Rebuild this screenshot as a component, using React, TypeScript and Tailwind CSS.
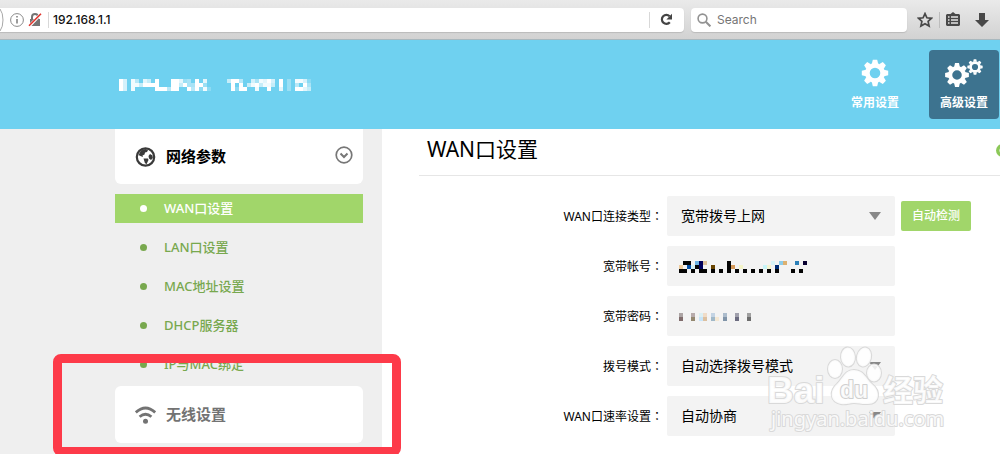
import { useState, type ReactNode } from "react";

const cjk = "font-['Noto_Sans','Noto_Sans_CJK_SC',sans-serif]";

type Cell = [number, number, string];

/* censored text, drawn as 4px blocks */
function Mosaic({ cells, cols, rows, className }: { cells: Cell[]; cols: number; rows: number; className?: string }) {
  return (
    <svg width={cols * 4} height={rows * 4} shapeRendering="crispEdges" className={className} aria-hidden="true">
      {cells.map(([x, y, c], i) => (
        <rect key={i} x={x * 4} y={y * 4} width="4" height="4" fill={c} />
      ))}
    </svg>
  );
}

// digits are tenths of white opacity, x is fully opaque
const brand = [
  "x7.95.86.x...xx834.x.8.....6xx5..7498x7.x.3.9972",
  "x7.996xxxx...xx6x44xx3......x.x.69x6996.x.3.5.x4",
  "x7.9.....xxx5xx..x5x292.....x2xx..9..x..8.3.xx86",
];
const brandCells: Cell[] = brand.flatMap((row, y) =>
  row.split("").flatMap((ch, x): Cell[] => (ch === "." ? [] : [[x, y, `rgba(255,255,255,${ch === "x" ? 1 : Number(ch) / 10})`]]))
);

const K = "#050505";
const account: Cell[] = [
  [1, 0, K], [2, 0, K], [4, 0, "#6cb4e4"], [5, 0, "#00005c"], [6, 0, "#dcc09c"], [12, 0, K], [23, 0, "#d8f4f8"],
  [25, 0, "#8cccea"], [26, 0, "#dcb070"], [29, 0, "#2c80b8"], [31, 0, "#080030"],
  [0, 1, "#f0cc9c"], [2, 1, "#0450a8"], [3, 1, "#d4f0f4"], [4, 1, K], [5, 1, "#00005c"], [8, 1, "#684400"], [12, 1, K],
  [13, 1, "#d49858"], [15, 1, "#f4f4c8"], [21, 1, "#c8f4f8"], [22, 1, "#f4f4d0"], [24, 1, "#002c74"],
  ...[0, 1, 3, 5, 6, 8, 10, 12, 14, 16, 18, 20, 22, 24, 28, 30].map((x): Cell => [x, 2, K]),
];
const password: Cell[] = [
  [0, 0, "#aca4a4"], [3, 0, "#b8acac"], [5, 0, "#dcf0f4"], [6, 0, "#f0dcc8"], [8, 0, "#c4d4e4"], [11, 0, "#acbccc"], [14, 0, "#a0a0ac"], [17, 0, "#a0a0a0"],
  [0, 1, "#806c6c"], [3, 1, "#948870"], [5, 1, "#c8e4f8"], [6, 1, "#dcc0a0"], [8, 1, "#a0b8c8"], [9, 1, "#f4e8d4"], [11, 1, "#8094a8"], [14, 1, "#6c6c80"], [17, 1, "#6c6c6c"],
];

function Gear({ x = 14, y = 14, s = 1 }: { x?: number; y?: number; s?: number }) {
  return (
    <g transform={`translate(${x} ${y}) scale(${s})`}>
      <circle r="7.6" fill="none" stroke="#fff" strokeWidth="4.6" />
      {[0, 45, 90, 135, 180, 225, 270, 315].map((a) => (
        <path key={a} d="M-3.2-9 -2.2-13.2H2.2L3.2-9z" fill="#fff" transform={`rotate(${a})`} />
      ))}
    </g>
  );
}

function BrowserBar() {
  return (
    <div className="flex h-10 shrink-0 items-center border-b border-[#a9b8be] bg-linear-to-b from-[#eaeaea] to-[#d2d2d2] font-[Inter,sans-serif]">
      <div className="flex h-6 flex-1 items-center rounded-r bg-white shadow-[0_1px_1px_#bbb]">
        <svg width="10" height="24" viewBox="0 0 10 24" fill="none" stroke="#a8a8a8" aria-hidden="true">
          <path d="M0 1Q3 5 3 12T0 23" />
        </svg>
        <svg width="14" height="14" viewBox="0 0 14 14" fill="none" stroke="#8a8a8a" aria-hidden="true">
          <circle cx="7" cy="7" r="6.4" />
          <path d="M7 6v4.5M7 3v1.6" strokeWidth="1.7" />
        </svg>
        <svg width="14" height="14" viewBox="0 0 14 14" className="ml-1" aria-hidden="true">
          <path d="M2 6h10v7H2z" fill="#747474" />
          <path d="M4 6V4a3 3 0 0 1 6 0v2" fill="none" stroke="#747474" strokeWidth="2" />
          <path d="M1 13.4 13 1" stroke="#fff" strokeWidth="3" />
          <path d="M1 12.8 13 .8" stroke="#e0332c" strokeWidth="1.6" />
        </svg>
        <span className="mr-1 ml-1.5 h-4 w-px bg-[#d8d8d8]" />
        <input aria-label="Address" defaultValue="192.168.1.1" className="min-w-0 flex-1 bg-transparent text-xs font-medium text-[#111] outline-none" />
        <span className="h-4 w-px bg-[#d8d8d8]" />
        <button aria-label="Reload" className="mr-0.5 flex w-8 justify-center">
          <svg width="13" height="13" viewBox="0 0 13 13" aria-hidden="true">
            <path d="M9.8 9.3A4.5 4.5 0 1 1 9.6 3.2" fill="none" stroke="#444" strokeWidth="2.2" />
            <path d="M12 .8v5.6H6.4z" fill="#444" />
          </svg>
        </button>
      </div>
      <label className="ml-[7px] flex h-6 w-54 items-center gap-1.5 rounded bg-white px-1.5 shadow-[0_1px_1px_#bbb]">
        <svg width="14" height="14" viewBox="0 0 14 14" fill="none" stroke="#929292" strokeWidth="1.6" aria-hidden="true">
          <circle cx="5.5" cy="5.5" r="4.4" />
          <path d="m8.8 8.8 4.6 4.6" strokeWidth="2" />
        </svg>
        <input aria-label="Search" placeholder="Search" className="min-w-0 flex-1 text-xs outline-none placeholder:text-[#757575]" />
      </label>
      <button aria-label="Bookmark" className="ml-2.5">
        <svg width="16" height="16" viewBox="0 0 16 16" fill="none" stroke="#484848" strokeWidth="1.7" aria-hidden="true">
          <path d="m8 1.6 1.9 4.2 4.6.5-3.4 3.1 1 4.6L8 11.7 3.9 14l1-4.6L1.5 6.3l4.6-.5z" />
        </svg>
      </button>
      <span className="mx-1.5 h-4 w-px bg-[#bdbdbd]" />
      <button aria-label="Library">
        <svg width="14" height="15" viewBox="0 0 14 15" aria-hidden="true">
          <path d="M7 0l2.5 2H13l1 1v10l-1 1H1l-1-1V3l1-1h3.5z" fill="#484848" />
          <path d="M2 5h1.5M5 5h7M2 8h1.5M5 8h7M2 11h1.5M5 11h7" stroke="#e4e4e4" strokeWidth="1.6" />
        </svg>
      </button>
      <button aria-label="Downloads" className="mr-[11px] ml-[15px]">
        <svg width="14" height="14" viewBox="0 0 14 14" fill="#484848" aria-hidden="true">
          <path d="M4 0h6v7h4l-7 7-7-7h4z" />
        </svg>
      </button>
    </div>
  );
}

function Header() {
  return (
    <header className="flex h-[89px] shrink-0 items-center bg-[#6fd1f0] pr-px pl-[119px]">
      <h1 aria-label="Router">
        <Mosaic cells={brandCells} cols={48} rows={3} />
      </h1>
      <nav className="ml-auto flex gap-[19px] text-xs font-bold text-white">
        <button className="flex h-[69px] w-[70px] flex-col items-center gap-2 pt-[9px]">
          <svg width="28" height="28" viewBox="0 0 28 28" aria-hidden="true">
            <Gear />
          </svg>
          <span className="leading-4">常用设置</span>
        </button>
        <button className="flex h-[69px] w-[70px] flex-col items-center gap-2 rounded bg-[#3d738f] pt-[9px]">
          <svg width="38" height="28" viewBox="0 0 38 28" aria-hidden="true">
            <Gear x={12} y={16} s={0.9} />
            <Gear x={30} y={8} s={0.58} />
          </svg>
          <span className="leading-4">高级设置</span>
        </button>
      </nav>
    </header>
  );
}

const links = ["WAN口设置", "LAN口设置", "MAC地址设置", "DHCP服务器", "IP与MAC绑定"];

function Sidebar() {
  const [active, setActive] = useState(0);
  return (
    <aside className="w-[382px] shrink-0 bg-[#efefef] pr-[19px] pl-[115px]">
      <button className="flex h-[55px] w-full items-center rounded-b-md bg-white px-5 text-[15px] font-bold text-black">
        <svg width="21" height="20" viewBox="0 0 20 20" className="mr-2.5" aria-hidden="true">
          <circle cx="10" cy="10" r="8.7" fill="#fff" stroke="#3a3a3a" strokeWidth="2.2" />
          <path d="M5.5 3.5 10 2l2.500 1.200L11.500 5 9.500 5.500 9 7.500 7 8.500 7.500 10l-2-.8L3 8zM8 11.500h4.500l.5 1.500-2 4.300-1.600-1.300zM14.500 7l2.500 1.500.4 2.500-1.900 2-2-1.500-.5-2.500z" fill="#3a3a3a" />
        </svg>
        网络参数
        <svg width="18" height="18" viewBox="0 0 18 18" fill="none" stroke="#777" strokeWidth="1.7" className="-mr-2.5 mb-1 ml-auto" aria-hidden="true">
          <circle cx="9" cy="9" r="7.8" />
          <path d="m5.5 7.5 3.5 3.5 3.5-3.5" strokeWidth="2" />
        </svg>
      </button>
      <ul className="mt-2.5 flex flex-col gap-2.5 text-[13px] font-medium">
        {links.map((text, i) => (
          <li key={text}>
            <a
              href="#"
              onClick={() => setActive(i)}
              className={`flex h-[29px] items-center gap-[17px] pl-[25px] ${i === active ? "bg-[#a1d66a] text-white" : "text-[#78a84e]"}`}
            >
              <span className="size-[7px] rounded-full bg-current" />
              {text}
            </a>
          </li>
        ))}
      </ul>
      <div className="relative mt-[7px]">
        <button className="flex h-[57px] w-full items-center gap-2.5 rounded-md bg-white px-5 text-[15px] font-bold text-[#737373]">
          <svg width="21" height="18" viewBox="0 0 21 18" fill="none" stroke="#737373" strokeWidth="2.8" aria-hidden="true">
            <path d="M.8 6.4Q10.5-2.4 20.2 6.4M4.6 10.8q5.9-5.2 11.8 0" />
            <circle cx="10.5" cy="15.3" r="2.5" fill="#737373" stroke="none" />
          </svg>
          无线设置
        </button>
        <div className="pointer-events-none absolute -top-8 -right-[38px] -bottom-[13px] -left-[62px] z-10 rounded-lg border-[9px] border-[#fd3a49]" />
      </div>
    </aside>
  );
}

function Row({ id, label, children }: { id: string; label: string; children: ReactNode }) {
  return (
    <div className="flex items-center">
      <label htmlFor={id} className="mr-1 w-[244px] shrink-0 text-right text-xs text-black">
        {label}
        <span lang="zh-TW" className="font-['Noto_Sans_CJK_TC',sans-serif]">：</span>
      </label>
      {children}
    </div>
  );
}

function Select({ id, value }: { id: string; value: string }) {
  return (
    <div className="relative w-57">
      <select id={id} className="h-10 w-full appearance-none rounded-xs bg-[#f3f3f3] pr-8 pl-3.5 text-sm text-black outline-none">
        <option>{value}</option>
      </select>
      <svg width="12" height="8" viewBox="0 0 12 8" className="pointer-events-none absolute top-4 right-3.5" aria-hidden="true">
        <path d="M0 0h12L6 8z" fill="#888" />
      </svg>
    </div>
  );
}

function Watermark() {
  return (
    <svg
      width="190"
      height="92"
      viewBox="0 0 190 92"
      className="pointer-events-none absolute top-[214px] left-[383px]"
      fill="#fff"
      fillOpacity="0.85"
      stroke="#d9d9d9"
      strokeWidth="2"
      paintOrder="stroke"
      strokeLinejoin="round"
      aria-hidden="true"
    >
      <text x="2" y="60" className="font-['Liberation_Sans',sans-serif] text-[37px] font-bold">Bai</text>
      <ellipse cx="70" cy="26" rx="7" ry="9" />
      <ellipse cx="83" cy="14" rx="7" ry="9.5" transform="rotate(-4 83 14)" />
      <ellipse cx="99" cy="14" rx="7" ry="9.5" transform="rotate(14 99 14)" />
      <ellipse cx="109" cy="30" rx="7" ry="8.5" />
      <path d="M89 27c10 0 12 9 18 14 9 7 8 20-4 20-6 .5-9-1-14-1s-8 2-13 1c-11-2-12-13-4-20 6-6 8-14 17-14z" />
      <text x="75" y="55" className="font-['Liberation_Sans',sans-serif] text-[23px] font-bold" stroke="#cfcfcf">du</text>
      <text x="118" y="58" className="font-['Noto_Sans_CJK_SC',sans-serif] text-[30px] font-bold">经验</text>
      <text x="6" y="83" className="font-['Noto_Sans',sans-serif] text-xl">jingyan.baidu.com</text>
    </svg>
  );
}

function WanForm() {
  return (
    <main className="relative min-w-0 flex-1 bg-white pl-[37px]">
      <div className="flex h-[47px] items-center justify-between border-b border-[#e6e6e6] pb-1 pl-2">
        <h2 className="text-[21px] text-black">WAN口设置</h2>
        <button aria-label="Help" className="-mr-[9px]">
          <svg width="13" height="13" viewBox="0 0 13 13" aria-hidden="true">
            <circle cx="6.5" cy="6.5" r="6.5" fill="#8cc858" />
            <circle cx="6.5" cy="6.5" r="3" fill="#fff" />
          </svg>
        </button>
      </div>
      <form className="mt-5 flex flex-col gap-2.5">
        <Row id="type" label="WAN口连接类型">
          <Select id="type" value="宽带拨号上网" />
          <button type="button" className="ml-1.5 h-[30px] w-[70px] rounded-xs bg-[#a1d66a] text-xs font-medium text-white">
            自动检测
          </button>
        </Row>
        <Row id="account" label="宽带帐号">
          <div className="relative w-57">
            <input id="account" className="h-10 w-full rounded-xs bg-[#f3f3f3] px-3 outline-none" />
            <Mosaic cells={account} cols={32} rows={3} className="pointer-events-none absolute top-[15px] left-3" />
          </div>
        </Row>
        <Row id="password" label="宽带密码">
          <div className="relative w-57">
            <input id="password" type="password" className="h-10 w-full rounded-xs bg-[#f3f3f3] px-3 outline-none" />
            <Mosaic cells={password} cols={18} rows={2} className="pointer-events-none absolute top-[17px] left-3" />
          </div>
        </Row>
        <Row id="mode" label="拨号模式">
          <Select id="mode" value="自动选择拨号模式" />
        </Row>
        <Row id="rate" label="WAN口速率设置">
          <Select id="rate" value="自动协商" />
        </Row>
      </form>
      <Watermark />
    </main>
  );
}

export default function App() {
  return (
    <div lang="zh-CN" className={`flex h-screen flex-col overflow-hidden bg-white ${cjk}`}>
      <BrowserBar />
      <Header />
      <div className="flex flex-1">
        <Sidebar />
        <WanForm />
      </div>
    </div>
  );
}
